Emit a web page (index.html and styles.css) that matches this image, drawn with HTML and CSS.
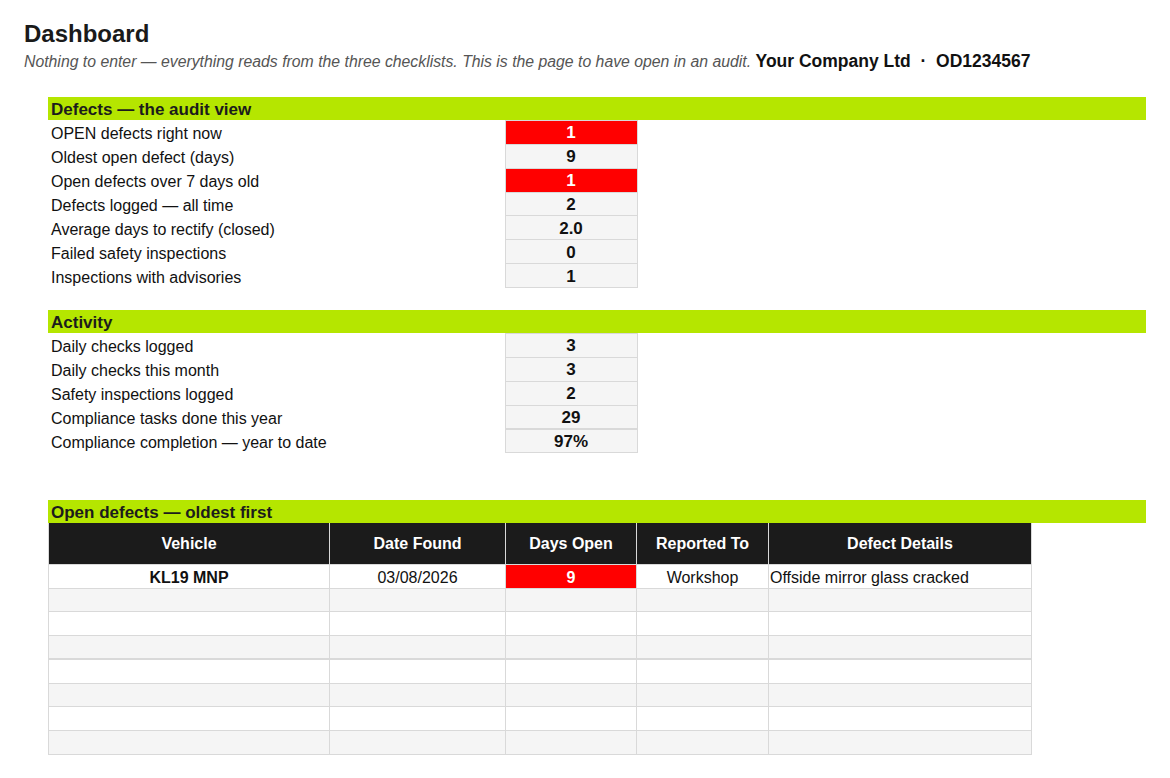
FILE: index.html
```html
<!DOCTYPE html>
<html lang="en">
<head>
<meta charset="utf-8">
<title>Dashboard</title>
<link rel="stylesheet" href="styles.css">
</head>
<body>
<div class="page">
  <h1 class="title">Dashboard</h1>
  <p class="sub"><span class="note">Nothing to enter — everything reads from the three checklists. This is the page to have open in an audit.</span> <strong class="company">Your Company Ltd&nbsp;&nbsp;·&nbsp;&nbsp;OD1234567</strong></p>

  <div class="sheet">
    <div class="band">Defects — the audit view</div>
    <table class="summary">
      <colgroup><col class="c-label"><col class="c-val"></colgroup>
      <tr><td class="lbl">OPEN defects right now</td><td class="val alert">1</td></tr>
      <tr><td class="lbl">Oldest open defect (days)</td><td class="val">9</td></tr>
      <tr><td class="lbl">Open defects over 7 days old</td><td class="val alert">1</td></tr>
      <tr><td class="lbl">Defects logged — all time</td><td class="val">2</td></tr>
      <tr><td class="lbl">Average days to rectify (closed)</td><td class="val">2.0</td></tr>
      <tr><td class="lbl">Failed safety inspections</td><td class="val">0</td></tr>
      <tr><td class="lbl">Inspections with advisories</td><td class="val">1</td></tr>
    </table>

    <div class="band band-activity">Activity</div>
    <table class="summary">
      <colgroup><col class="c-label"><col class="c-val"></colgroup>
      <tr><td class="lbl">Daily checks logged</td><td class="val">3</td></tr>
      <tr><td class="lbl">Daily checks this month</td><td class="val">3</td></tr>
      <tr><td class="lbl">Safety inspections logged</td><td class="val">2</td></tr>
      <tr><td class="lbl">Compliance tasks done this year</td><td class="val">29</td></tr>
      <tr class="split"><td class="lbl">Compliance completion — year to date</td><td class="val">97%</td></tr>
    </table>

    <div class="band band-open">Open defects — oldest first</div>
    <table class="defects">
      <colgroup>
        <col class="d-veh"><col class="d-date"><col class="d-days"><col class="d-rep"><col class="d-det">
      </colgroup>
      <thead>
        <tr><th>Vehicle</th><th>Date Found</th><th>Days Open</th><th>Reported To</th><th>Defect Details</th></tr>
      </thead>
      <tbody>
        <tr><td class="ctr bold">KL19 MNP</td><td class="ctr">03/08/2026</td><td class="ctr bold alert">9</td><td class="ctr">Workshop</td><td class="left">Offside mirror glass cracked</td></tr>
        <tr class="alt"><td></td><td></td><td></td><td></td><td></td></tr>
        <tr><td></td><td></td><td></td><td></td><td></td></tr>
        <tr class="alt"><td></td><td></td><td></td><td></td><td></td></tr>
        <tr class="split"><td></td><td></td><td></td><td></td><td></td></tr>
        <tr class="alt"><td></td><td></td><td></td><td></td><td></td></tr>
        <tr><td></td><td></td><td></td><td></td><td></td></tr>
        <tr class="alt"><td></td><td></td><td></td><td></td><td></td></tr>
      </tbody>
    </table>
  </div>
</div>
</body>
</html>
```

FILE: styles.css
```css
html, body {
  margin: 0;
  padding: 0;
  background: #ffffff;
}

body {
  font-family: "Liberation Sans", Arial, sans-serif;
  color: #111111;
}

.page {
  padding: 19px 24px 0 24px;
}

.title {
  margin: 0;
  font-size: 24px;
  line-height: 30px;
  font-weight: bold;
  color: #1a1a1a;
}

.sub {
  margin: 0;
  height: 25px;
  line-height: 24px;
  white-space: nowrap;
}

.note {
  font-style: italic;
  font-size: 15.8px;
  color: #555555;
}

.company {
  font-size: 17.5px;
  font-weight: bold;
  color: #111111;
}

.sheet {
  margin: 23px 0 0 24px;
  width: 1098px;
}

.band {
  background: #b5e600;
  height: 23px;
  line-height: 25px;
  padding-left: 3px;
  font-size: 17px;
  font-weight: bold;
  color: #1c1c1c;
}

.band-activity {
  margin-top: 22px;
}

.band-open {
  margin-top: 47px;
}

table {
  border-collapse: collapse;
  table-layout: fixed;
}

.summary {
  width: 589px;
}

.c-label { width: 457px; }
.c-val { width: 132px; }

.summary tr {
  height: 23.86px;
}

.summary td {
  padding: 0;
  line-height: 18px;
}

.summary .lbl {
  font-size: 16px;
  padding: 4px 0 0 3px;
  color: #111111;
  white-space: nowrap;
}

.summary .val {
  background: #f5f5f5;
  border: 1px solid #d9d9d9;
  padding-top: 2px;
  text-align: center;
  font-size: 17px;
  font-weight: bold;
  color: #111111;
}

.summary tr.split td.val {
  border-top: 2px solid #d9d9d9;
}

.alert {
  background: #ff0000 !important;
  color: #ffffff !important;
}

.defects {
  width: 983px;
}

.d-veh { width: 281px; }
.d-date { width: 176px; }
.d-days { width: 131px; }
.d-rep { width: 132px; }
.d-det { width: 263px; }

.defects thead tr {
  height: 41px;
}

.defects tbody tr {
  height: 23.75px;
}

.defects th {
  background: #1b1b1b;
  color: #ffffff;
  font-size: 16px;
  font-weight: bold;
  padding: 0;
  border: 1px solid #d9d9d9;
  border-top: none;
  text-align: center;
}

.defects td {
  padding: 3px 0 0 0;
  line-height: 18px;
  border: 1px solid #d9d9d9;
  font-size: 16px;
  color: #111111;
  background: #ffffff;
}

.defects tr.alt td {
  background: #f5f5f5;
}

.defects tr.split td {
  border-top: 2px solid #d9d9d9;
}

.defects .ctr { text-align: center; }
.defects .left { text-align: left; padding-left: 1px; }
.defects .bold { font-weight: bold; }
```
